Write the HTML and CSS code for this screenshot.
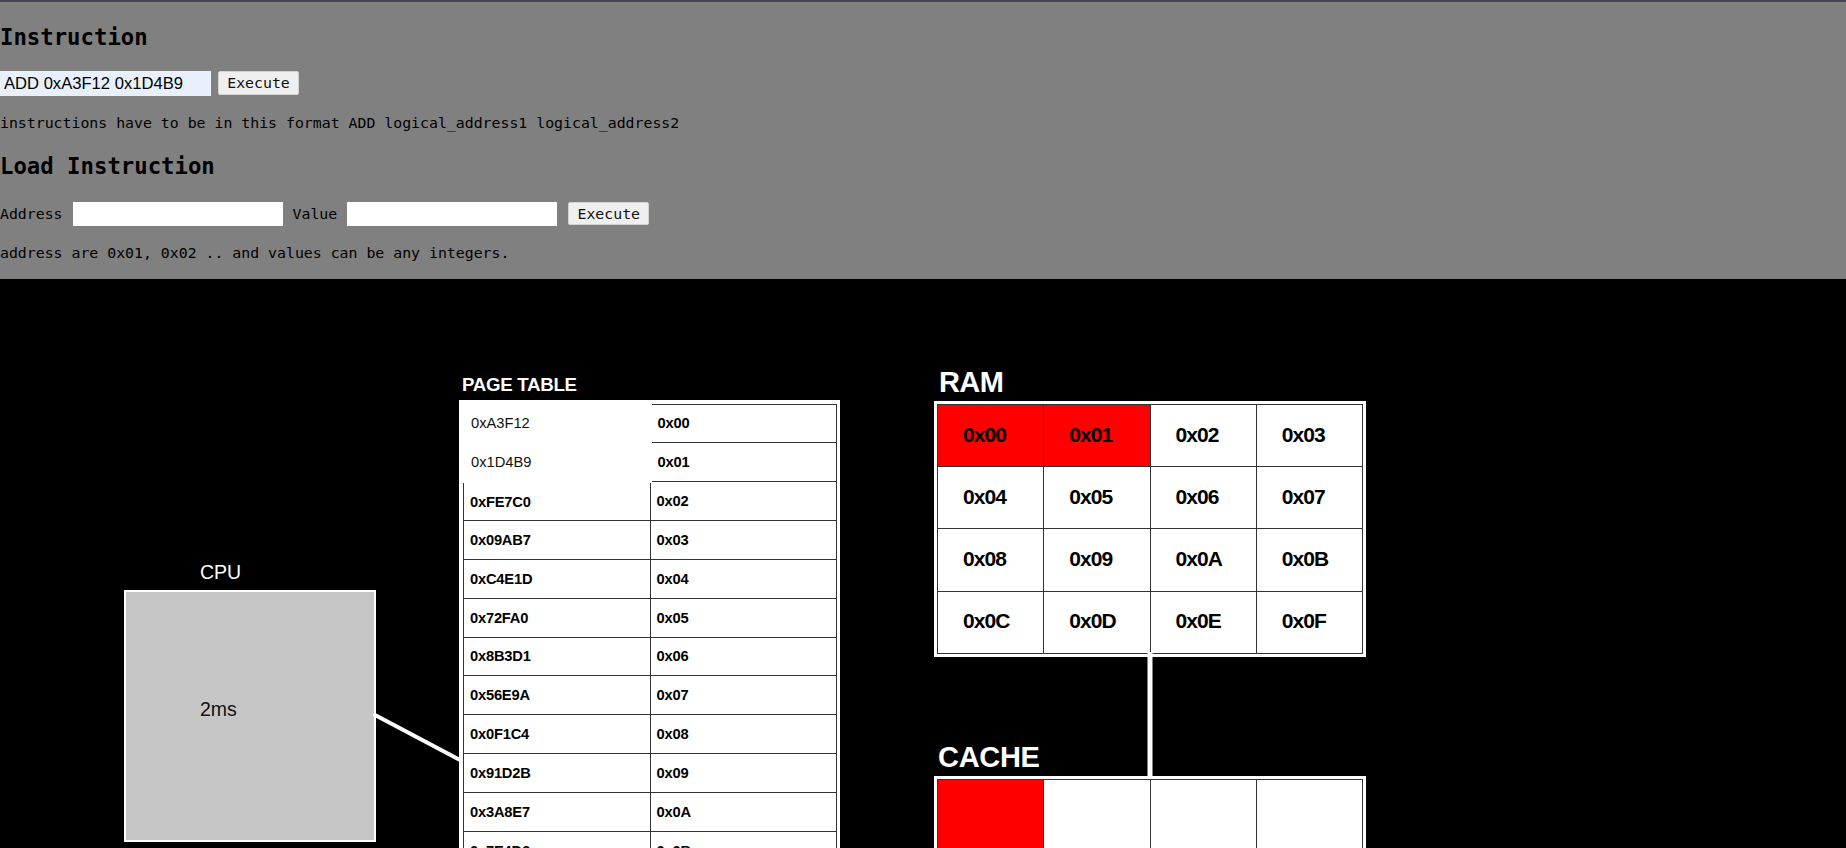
FILE: index.html
```html
<!DOCTYPE html>
<html lang="en">
<head>
<meta charset="utf-8">
<title>Memory Simulator</title>
<link rel="stylesheet" href="styles.css">
</head>
<body>
<section class="controls">
  <h2 class="title title-first">Instruction</h2>
  <div class="row row-instr">
    <input class="field field-instr" type="text" value="ADD 0xA3F12 0x1D4B9">
    <button class="btn btn-instr">Execute</button>
  </div>
  <p class="hint">instructions have to be in this format ADD logical_address1 logical_address2</p>
  <h2 class="title title-second">Load Instruction</h2>
  <div class="row row-load">
    <span class="lbl">Address</span>
    <input class="field field-load" type="text">
    <span class="lbl">Value</span>
    <input class="field field-load" type="text">
    <button class="btn btn-load">Execute</button>
  </div>
  <p class="hint">address are 0x01, 0x02 .. and values can be any integers.</p>
</section>

<main class="diagram">
  <div class="node cpu">
    <div class="cpu-label">CPU</div>
    <div class="cpu-box"><span class="cpu-time">2ms</span></div>
  </div>

  <div class="node pagetable">
    <div class="pt-label">PAGE TABLE</div>
    <div class="pt-frame">
      <table class="pt">
        <tr><td class="hit">0xA3F12</td><td>0x00</td></tr>
        <tr><td class="hit">0x1D4B9</td><td>0x01</td></tr>
        <tr><td>0xFE7C0</td><td>0x02</td></tr>
        <tr><td>0x09AB7</td><td>0x03</td></tr>
        <tr><td>0xC4E1D</td><td>0x04</td></tr>
        <tr><td>0x72FA0</td><td>0x05</td></tr>
        <tr><td>0x8B3D1</td><td>0x06</td></tr>
        <tr><td>0x56E9A</td><td>0x07</td></tr>
        <tr><td>0x0F1C4</td><td>0x08</td></tr>
        <tr><td>0x91D2B</td><td>0x09</td></tr>
        <tr><td>0x3A8E7</td><td>0x0A</td></tr>
        <tr><td>0x7E4D6</td><td>0x0B</td></tr>
        <tr><td>0xB2C59</td><td>0x0C</td></tr>
        <tr><td>0x64F0E</td><td>0x0D</td></tr>
        <tr><td>0xD9A13</td><td>0x0E</td></tr>
        <tr><td>0x2C7B8</td><td>0x0F</td></tr>
      </table>
    </div>
  </div>

  <div class="node memory">
    <div class="mem-label">RAM</div>
    <div class="mem-grid">
      <div class="cell used">0x00</div>
      <div class="cell used">0x01</div>
      <div class="cell">0x02</div>
      <div class="cell">0x03</div>
      <div class="cell">0x04</div>
      <div class="cell">0x05</div>
      <div class="cell">0x06</div>
      <div class="cell">0x07</div>
      <div class="cell">0x08</div>
      <div class="cell">0x09</div>
      <div class="cell">0x0A</div>
      <div class="cell">0x0B</div>
      <div class="cell">0x0C</div>
      <div class="cell">0x0D</div>
      <div class="cell">0x0E</div>
      <div class="cell">0x0F</div>
    </div>
    <div class="mem-label cache-label">CACHE</div>
    <div class="mem-grid cache-grid">
      <div class="cell used"></div>
      <div class="cell"></div>
      <div class="cell"></div>
      <div class="cell"></div>
    </div>
  </div>

  <svg class="wires" width="1846" height="569" viewBox="0 0 1846 569">
    <line x1="375" y1="436" x2="460" y2="481" stroke="#fff" stroke-width="4" stroke-linecap="round"/>
    <line x1="1150" y1="373" x2="1150" y2="498" stroke="#fff" stroke-width="5"/>
  </svg>
</main>
</body>
</html>
```

FILE: styles.css
```css
html, body {
  margin: 0;
  padding: 0;
  height: 100%;
  overflow: hidden;
  background: #000;
}

body {
  font-family: "DejaVu Sans Mono", monospace;
  color: #000;
}

/* ---------- top controls ---------- */
.controls {
  background: #808080;
  border-top: 2px solid #45455a;
  height: 277px;
  overflow: hidden;
}

.title {
  margin: 0;
  font-size: 22.3px;
  line-height: 26px;
  font-weight: bold;
}

.title-first { margin-top: 22px; }
.title-second { margin-top: 21px; }

.row {
  display: flex;
  align-items: center;
}

.row-instr {
  margin-top: 21px;
  height: 25px;
  gap: 7px;
}

.row-load {
  margin-top: 23px;
  height: 24px;
  gap: 10px;
  align-items: flex-start;
}

.hint {
  margin: 18px 0 0;
  font-size: 14.85px;
  line-height: 18px;
}

.lbl {
  font-size: 14.85px;
  line-height: 18px;
  margin-top: 3px;
}

.field {
  border: none;
  margin: 0;
  padding: 0 0 0 4px;
  outline: none;
  background: #fff;
  box-sizing: border-box;
}

.field-instr {
  width: 211px;
  height: 25px;
  background: #e8f0fe;
  font-family: "Liberation Sans", Arial, sans-serif;
  font-size: 16.6px;
  color: #000;
}

.field-load {
  width: 210px;
  height: 24px;
}

.btn {
  margin: 0;
  padding: 0;
  width: 81px;
  background: #efefef;
  border: 1px solid #d4d4d4;
  border-radius: 2px;
  font-family: "DejaVu Sans Mono", monospace;
  font-size: 14.85px;
  color: #111;
  box-sizing: border-box;
}

.btn-instr { height: 24px; align-self: flex-start; }
.btn-load { height: 23px; margin-left: 1px; }

/* ---------- diagram ---------- */
.diagram {
  position: relative;
  height: 569px;
  overflow: hidden;
  background: #000;
  font-family: "Liberation Sans", Arial, sans-serif;
}

.node { position: absolute; }

.wires {
  position: absolute;
  left: 0;
  top: 0;
  pointer-events: none;
}

/* CPU */
.cpu { left: 124px; top: 283px; }

.cpu-label {
  color: #fff;
  font-size: 19.5px;
  line-height: 20px;
  padding-left: 76px;
  margin-bottom: 8px;
}

.cpu-box {
  width: 252px;
  height: 252px;
  box-sizing: border-box;
  border: 2px solid #fff;
  background: #c6c6c6;
  padding: 107px 0 0 74px;
}

.cpu-time {
  display: block;
  font-size: 19.5px;
  line-height: 20px;
  color: #111;
}

/* page table */
.pagetable { left: 459px; top: 95.5px; }

.pt-label {
  color: #fff;
  font-weight: bold;
  font-size: 18.7px;
  line-height: 20px;
  padding-left: 3px;
  margin-bottom: 5px;
  letter-spacing: -0.3px;
}

.pt-frame {
  width: 381px;
  box-sizing: border-box;
  background: #fff;
  padding: 3px 3px 0 3px;
}

.pt {
  width: 100%;
  border-collapse: collapse;
  table-layout: fixed;
}

.pt tr { height: 38.85px; }

.pt td {
  border: 1px solid #333;
  padding: 0 6px;
  font-size: 14.7px;
  font-weight: bold;
  color: #000;
  background: #fff;
  letter-spacing: -0.2px;
}

.pt td.hit {
  border: 3px solid #fff;
  font-weight: normal;
  color: #111;
  letter-spacing: 0;
}

/* RAM / cache */
.memory { left: 934px; top: 87.7px; }

.mem-label {
  color: #fff;
  font-weight: bold;
  font-size: 29px;
  line-height: 30px;
  padding-left: 5px;
  margin-bottom: 4.3px;
  letter-spacing: -0.6px;
}

.cache-label {
  margin-top: 84.7px;
  padding-left: 4px;
  margin-bottom: 4px;
  letter-spacing: -0.3px;
}

.mem-grid {
  display: grid;
  grid-template-columns: repeat(4, 105.25px);
  grid-auto-rows: 61.25px;
  gap: 1px;
  padding: 1px;
  border: 3px solid #fff;
  background: #333;
}

.cache-grid { grid-auto-rows: 106px; }

.cell {
  background: #fff;
  display: flex;
  align-items: center;
  padding: 0 0 3px 25px;
  font-size: 21px;
  line-height: 21px;
  font-weight: bold;
  letter-spacing: -0.9px;
  color: #000;
}

.cell.used { background: #ff0000; }
```
